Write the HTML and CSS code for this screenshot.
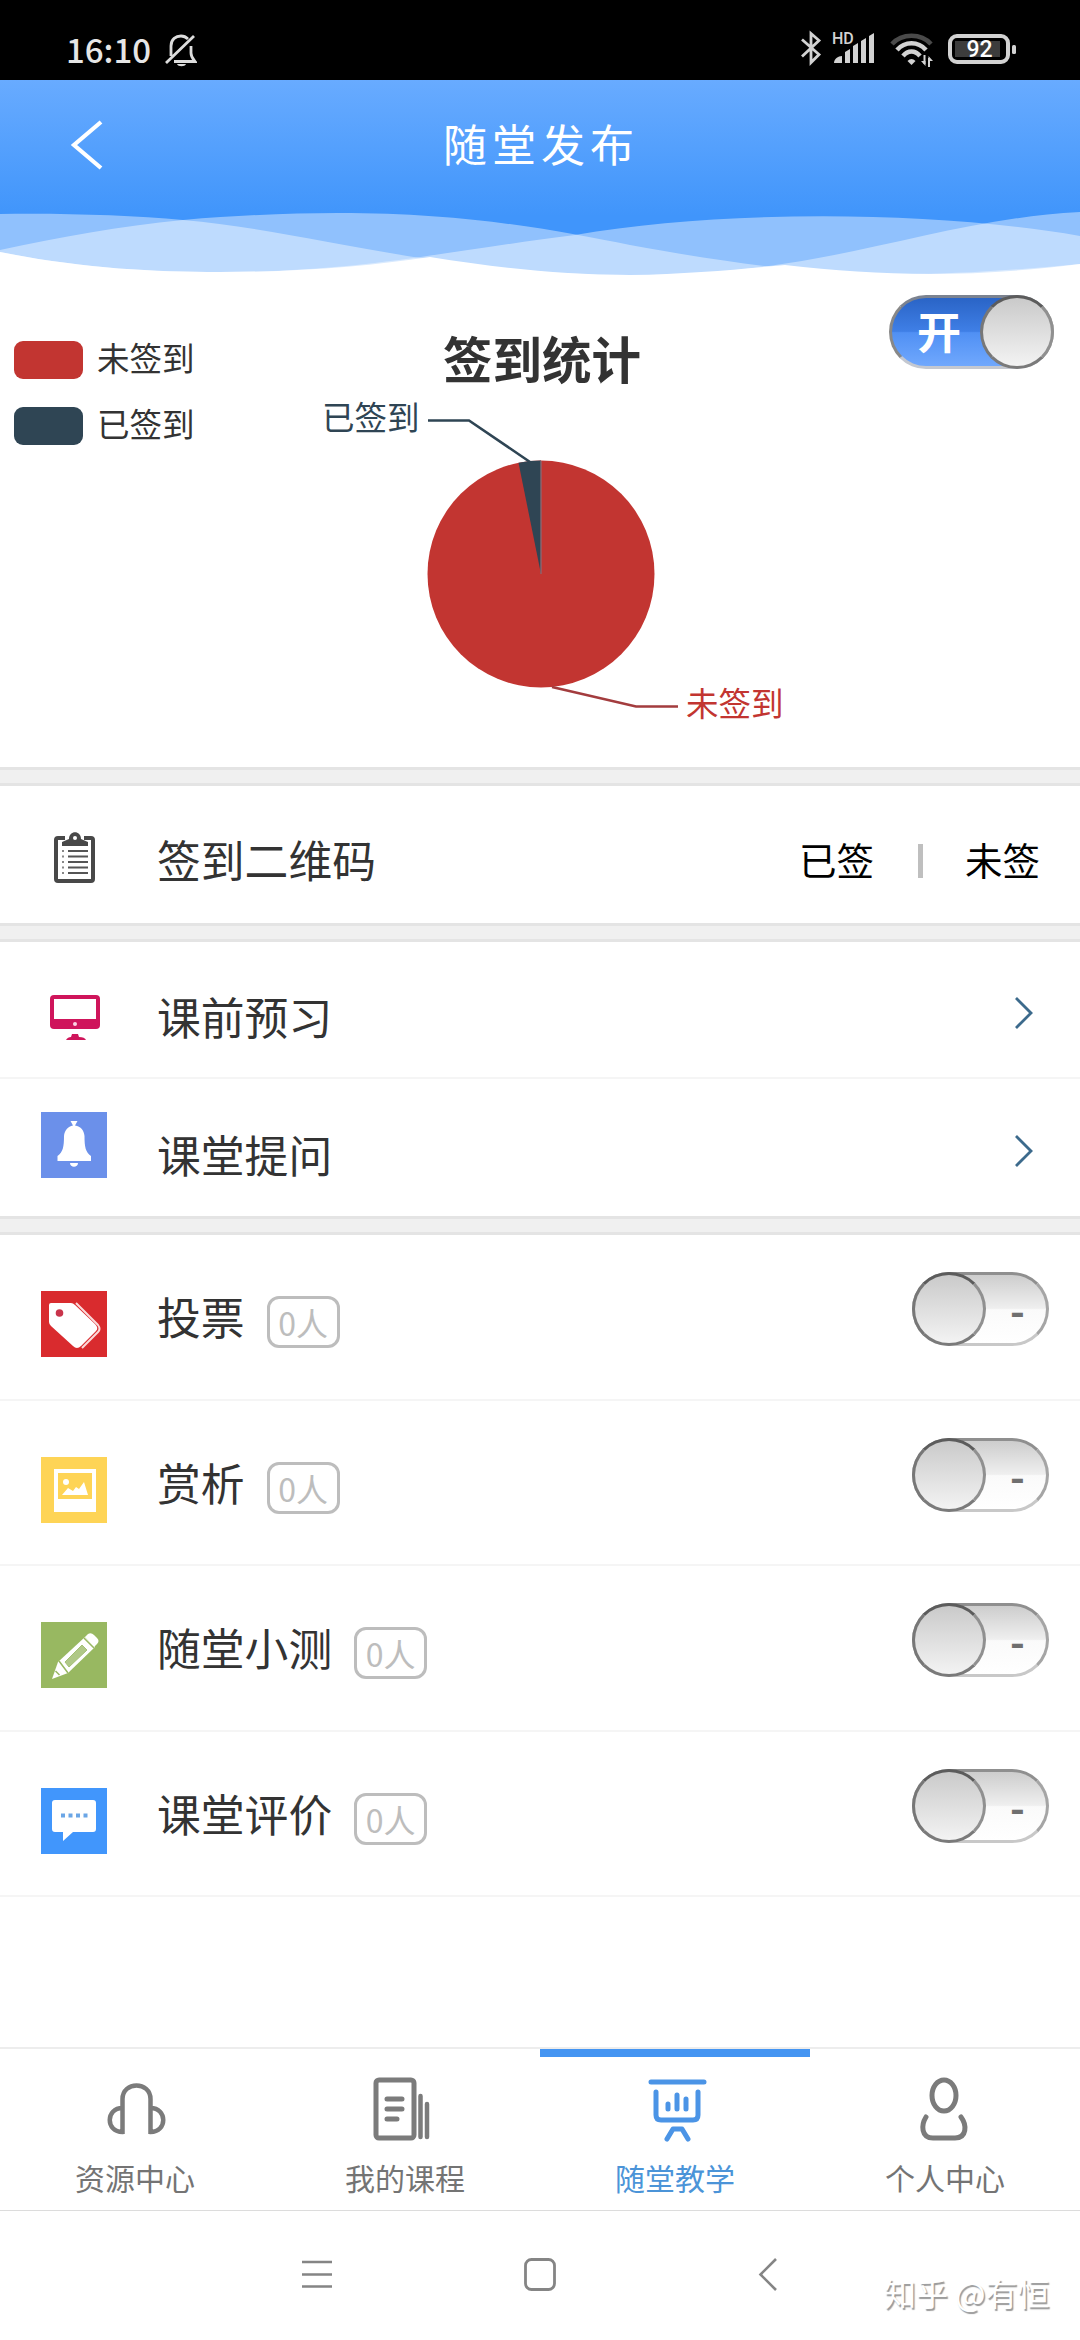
FILE: index.html
```html
<!DOCTYPE html>
<html lang="zh-CN">
<head>
<meta charset="utf-8">
<title>随堂发布</title>
<link rel="stylesheet" href="styles.css">
</head>
<body>
<div class="screen">
  <div class="status">
    <span class="clock">16:10</span>
    <svg class="mute" width="32" height="34" viewBox="0 0 32 34" fill="none" stroke="#ddd" stroke-width="2.8">
      <path d="M6 22V12C6 5 11 2 16 2c3 0 5 1 7 3M26 12v7c0 4 2 6 4 8.500H9M1 29L29 2"/>
      <path d="M12 30h9c-1 3-8 3-9 0z" fill="#ddd" stroke="none"/>
    </svg>
    <svg class="sys" width="220" height="40" viewBox="0 0 220 40">
      <path d="M2 10l17 15-8 8V4l8 7L2 27" transform="translate(0,-0.500)" fill="none" stroke="#d2d2d2" stroke-width="2.800"/>
      <text x="32" y="14" class="hd">HD</text>
      <g fill="#d2d2d2"><path d="M34 33c0-4 4-7 8-7v7z"/><path d="M45 22l5-3v14h-5zM53 16l5-3v20h-5zM61 11l5-3v25h-5zM69 6l5-3v30h-5z"/></g>
      <g fill="none" stroke="#d2d2d2" stroke-width="4.500"><path stroke="#4a4a4a" d="M92 14c10-11 29-11 39 0"/><path d="M97 20c8-9 21-9 29 0M103 26c5-6 12-6 17 0"/></g>
      <path d="M107.500 31q4-4 8 0l-4 4z" fill="#d2d2d2"/>
      <path d="M124.500 25v9M129 37v-9" stroke="#d2d2d2" stroke-width="2"/><path d="M121 31h4.500v5zM128.500 26v5h4.500z" fill="#d2d2d2"/>
      <rect x="150" y="6" width="58" height="26" rx="7" fill="none" stroke="#d2d2d2" stroke-width="4"/>
      <rect x="155" y="11" width="45" height="16" fill="#3c3c3c"/>
      <rect x="212" y="15" width="4" height="9" rx="1.500" fill="#d2d2d2"/>
      <text x="179.500" y="26.500" text-anchor="middle" class="pct">92</text>
    </svg>
  </div>

  <header class="header">
    <div class="bar">
      <svg class="back" width="36" height="52" viewBox="0 0 36 52" fill="none" stroke="#fff" stroke-width="4.200"><path d="M31 3L4 26l27 23"/></svg>
      <h1>随堂发布</h1>
    </div>
    <svg class="waves" width="1080" height="70" viewBox="0 0 1080 70">
      <g fill="#fff" fill-opacity=".42">
        <path d="M0 4C60 3 130 5 183 10C310 21 430 64 630 65C830 66 930 10 1080 2V70H0z"/>
        <path d="M0 40C60 27 120 16 183 10C420-10 540 18 630 35C800 66 890 72 1080 54V70H0z"/>
        <path d="M0 42C80 58 150 62 220 62C360 62 440 42 575 25C720 0 930 0 1080 26V70H0z"/>
      </g>
      <path fill="#fff" d="M0 42C80 58 150 62 220 62C300 62 370 56 430 47C500 58 560 65 630 65C690 64 740 59 785 55C880 66 970 68 1080 54V70H0z"/>
    </svg>
  </header>

  <section class="chart">
    <ul class="legend">
      <li><i class="sw red"></i><span>未签到</span></li>
      <li><i class="sw navy"></i><span>已签到</span></li>
    </ul>
    <svg class="pie" width="520" height="487" viewBox="280 280 520 487">
      <text x="542" y="379" text-anchor="middle" class="chart-title">签到统计</text>
      <circle cx="541" cy="574" r="113.500" fill="#c23531"/>
      <path d="M541 574L518.500 462.800A113.500 113.500 0 0 1 541 460.500z" fill="#2f4554"/>
      <path d="M541 461v113" stroke="#8d6a74" stroke-width="1.300"/>
      <path d="M428 420.500h41L530 462" fill="none" stroke="#2f4554" stroke-width="2.600"/>
      <path d="M552 687l84 19.500h42" fill="none" stroke="#a33c3e" stroke-width="2.600"/>
      <text x="322" y="430" class="lbl" fill="#2f4554">已签到</text>
      <text x="686" y="716" class="lbl" fill="#c23531">未签到</text>
    </svg>
    <div class="switch on"><span>开</span><b></b></div>
  </section>

  <section class="group">
    <div class="row qr">
      <svg class="ico" width="66" height="66" viewBox="0 0 66 66">
        <rect x="15" y="13" width="37" height="43" rx="2" fill="none" stroke="#484848" stroke-width="4"/>
        <path d="M24 10h19v8H24z" fill="#fff"/>
        <path d="M21 21v-4l7-3c0-9 12-9 12 0l7 3v4z" fill="#484848"/><circle cx="34" cy="13" r="2" fill="#fff"/>
        <path d="M27 26h20M27 31.500h20M27 37h20M27 42.500h20M27 48h20" stroke="#555" stroke-width="2.200"/>
        <path d="M21 26h2M21 31.500h2M21 37h2M21 42.500h2M21 48h2" stroke="#888" stroke-width="2.200"/>
      </svg>
      <span class="name">签到二维码</span>
      <span class="opt">已签</span><i class="sep"></i><span class="opt">未签</span>
    </div>
  </section>

  <section class="group">
    <div class="row link line">
      <svg class="ico monitor" width="66" height="66" viewBox="0 0 66 66">
        <rect x="9" y="10" width="50" height="34" rx="4" fill="#cf155b"/><path d="M13 14h42v20H13z" fill="#fff"/><circle cx="34" cy="39" r="2" fill="#fbd3e2"/>
        <path d="M31 49h6l1 3c4 0 6 1 7 3H25c1-2 3-3 5-3z" fill="#cf155b"/>
      </svg>
      <span class="name">课前预习</span>
      <svg class="go" width="22" height="34" viewBox="0 0 22 34"><path d="M3 2l15 15L3 32"/></svg>
    </div>
    <div class="row link">
      <svg class="ico bell" width="66" height="66" viewBox="0 0 66 66">
        <path d="M0 0h66v66H0z" fill="#6b90ea"/>
        <path d="M29.500 9h7l-2.500 4.500c6 1 9 5 9.500 10.500c0 11 1 16 6.500 20v5H16.500v-5c5.500-4 6.500-9 6.500-20c.5-5.500 4-9.500 9-10.500zM29 51h8c0 5-8 5-8 0z" fill="#fff"/>
      </svg>
      <span class="name">课堂提问</span>
      <svg class="go" width="22" height="34" viewBox="0 0 22 34"><path d="M3 2l15 15L3 32"/></svg>
    </div>
  </section>

  <section class="group">
    <div class="row act">
      <svg class="ico" width="66" height="66" viewBox="0 0 66 66">
        <path d="M0 0h66v66H0z" fill="#d92b2e"/>
        <path d="M8 14q0-2 2-2h20q2 0 4 2l20 19q4 4 1 7L40 55q-4 4-8 0L10 35q-2-2-2-4z" fill="#fff"/><circle cx="18.500" cy="22" r="3.800" fill="#c9344b"/>
        <path d="M35 12l22 22q3 4 0 7L41 57" fill="none" stroke="#fbdada" stroke-width="2"/>
      </svg>
      <span class="name">投票</span><span class="count">0人</span>
      <div class="switch off"><b></b><span>-</span></div>
    </div>
    <div class="row act">
      <svg class="ico" width="66" height="66" viewBox="0 0 66 66">
        <path d="M0 0h66v66H0z" fill="#fed456"/>
        <path d="M13 12h42v43H13zM17 16v26h34V16z" fill="#fff" fill-rule="evenodd"/>
        <path d="M21 38l6-7 5 3 3-4 3 2 5-7 4 13z" fill="#fff"/><circle cx="25" cy="25" r="3" fill="#fff"/>
      </svg>
      <span class="name">赏析</span><span class="count">0人</span>
      <div class="switch off"><b></b><span>-</span></div>
    </div>
    <div class="row act">
      <svg class="ico" width="66" height="66" viewBox="0 0 66 66">
        <path d="M0 0h66v66H0z" fill="#98b861"/>
        <path d="M11 57l6-17 27-25 10 10-27 26z" fill="#fff"/>
        <path d="M44 15l3-3q3-2 6 1l3 3q3 3 0 6l-3 3z" fill="#fff"/>
        <path d="M43 16l10 10M18 39l9 12M14.500 49l4 4" stroke="#98b861" stroke-width="1.500"/>
        <path d="M24 40L41 23l5 5-18 17z" fill="#b0c887" stroke="#a4c074"/>
      </svg>
      <span class="name">随堂小测</span><span class="count">0人</span>
      <div class="switch off"><b></b><span>-</span></div>
    </div>
    <div class="row act">
      <svg class="ico" width="66" height="66" viewBox="0 0 66 66">
        <path d="M0 0h66v66H0z" fill="#4196fc"/>
        <path d="M14 12h38q3 0 3 3v26q0 3-3 3H32l-10 9V44h-8q-3 0-3-3V15q0-3 3-3z" fill="#fff"/>
        <path d="M20 27.500h4M27.500 27.500h4M35 27.500h4M42.500 27.500h4" stroke="#6ba6e6" stroke-width="4"/>
      </svg>
      <span class="name">课堂评价</span><span class="count">0人</span>
      <div class="switch off"><b></b><span>-</span></div>
    </div>
  </section>

  <nav class="tabs">
    <a class="tab">
      <svg width="70" height="70" viewBox="0 0 70 70" fill="none" stroke="#7b7b7b" stroke-width="4.500"><path d="M22.500 62V27c0-18 28-18 28 0v35M22.500 36c-17 0-17 24 0 24h1M50.500 36c17 0 17 24 0 24h-1"/></svg>
      <span>资源中心</span>
    </a>
    <a class="tab">
      <svg width="70" height="70" viewBox="0 0 70 70" fill="none" stroke="#7b7b7b" stroke-width="5" stroke-linecap="round"><rect x="6" y="8" width="38" height="58" rx="3"/><path d="M17 27h15M17 37h15M17 47h10"/><path d="M50.500 24v41M57 32v33" stroke-width="4.500"/></svg>
      <span>我的课程</span>
    </a>
    <a class="tab active">
      <svg width="70" height="70" viewBox="0 0 70 70" fill="none" stroke="#4b94e6" stroke-width="5" stroke-linecap="round" stroke-linejoin="round"><path d="M11 10h53M16 20v23q0 5 5 5h32q5 0 5-5V20M28 32v5M37 23v14M46 27v10M27 67l6-10h9l6 10"/></svg>
      <span>随堂教学</span>
    </a>
    <a class="tab">
      <svg width="70" height="70" viewBox="0 0 70 70" fill="none" stroke="#7b7b7b" stroke-width="5" stroke-linecap="round"><ellipse cx="34" cy="23.500" rx="12" ry="15.500"/><path d="M16 45c-5 8-5 21 7 21h22c12 0 12-13 6-21"/></svg>
      <span>个人中心</span>
    </a>
  </nav>

  <footer class="sysnav">
    <svg width="32" height="34" viewBox="0 0 32 34" stroke="#858585" stroke-width="2.600"><path d="M1 5h30M1 17.500h30M1 29.500h30"/></svg>
    <svg width="34" height="36" viewBox="0 0 34 36" fill="none" stroke="#858585" stroke-width="2.800"><rect x="2.500" y="2.500" width="29" height="30" rx="6"/></svg>
    <svg width="20" height="36" viewBox="0 0 20 36" fill="none" stroke="#858585" stroke-width="2.600"><path d="M18 2L2.500 17.500 18 33"/></svg>
    <span class="mark">知乎 @有恒</span>
  </footer>
</div>
</body>
</html>
```
FILE: styles.css
```css
*, *::before { box-sizing: border-box; }
body { margin: 0; background: #fff; font-family: "Noto Sans CJK SC", sans-serif; color: #333; }
.screen { width: 1080px; height: 2340px; display: flex; flex-direction: column; overflow: hidden; }
.screen > * { flex: none; }
svg { display: block; }

.status { height: 80px; background: #000; display: flex; align-items: flex-start; padding: 29px 54px 0 66px; }
.clock { font-size: 33px; line-height: 40px; font-weight: 500; color: #e6e6e6; width: 99px; white-space: nowrap; }
.mute { margin-top: 5px; }
.sys { margin: 1px 6px 0 auto; }
.hd { font: 500 16px Roboto, sans-serif; fill: #d2d2d2; }
.pct { font: 500 23px Roboto, sans-serif; fill: #fff; }

.header { height: 200px; background: linear-gradient(#68abff, #4095fb 68%); display: flex; flex-direction: column; }
.bar { height: 130px; display: grid; grid-template-columns: 200px 1fr 200px; align-items: center; }
.back { margin-left: 70px; }
.bar h1 { margin: 0 0 5px; font-size: 44px; font-weight: 400; letter-spacing: 5px; line-height: 60px; color: #fff; text-align: center; padding-left: 2px; }

.chart { height: 487px; display: grid; grid-template-columns: 280px 520px 1fr; }
.legend { list-style: none; margin: 0; padding: 46px 0 0 14px; font-size: 32.500px; }
.legend li { display: flex; align-items: center; gap: 14px; height: 66px; line-height: 66px; white-space: nowrap; }
.legend span { margin-top: -4px; }
.sw { width: 69px; height: 38px; border-radius: 9px; margin-top: 2px; }
.red { background: #c23531; }
.navy { background: #2f4554; }
.chart-title { font-size: 49.500px; font-weight: 700; fill: #333; }
.lbl { font-size: 32.500px; }

.switch { display: flex; align-items: center; height: 74px; border: 3px solid; border-radius: 37px; }
.switch b { flex: none; width: 74px; height: 74px; border-radius: 50%; border: 3px solid; border-color: #5c5c5c #909090 #7a7a7a #777; background: linear-gradient(#cacaca, #f3f3f3); }
.switch span { flex: 1; text-align: center; }
.on { width: 165px; margin: 15px 0 0 89px; border-color: #7c8390 #999 #c4c8d0 #888; background: linear-gradient(#2a64c6, #3f7fe6 49%, #5090f4 51%, #70a8fd); }
.on span { font-size: 44px; font-weight: 700; color: #fff; padding-left: 6px; line-height: 60px; margin-top: -4px; }
.on b { margin-right: -3px; }
.off { width: 137px; border-color: #8f8f8f #a5a5a5 #c8c8c8; background: linear-gradient(#cdcdcd, #efefef 49%, #fafafa 51%, #fff); }
.off b { margin-left: -3px; }
.off span { font-size: 40px; font-weight: 700; color: #6f6f6f; line-height: 50px; padding: 0 0 0 3px; }

.group { border-top: 19px solid #f0f0f0; position: relative; }
.group::before { content: ""; position: absolute; inset: -19px 0 auto; height: 19px; border: solid #e4e4e4; border-width: 3px 0; }
.row { display: flex; align-items: center; padding-left: 41px; }
.ico { flex: none; margin-right: 50px; }
.name { font-size: 43.800px; line-height: 60px; white-space: nowrap; color: #333; }
.qr { height: 137px; padding-right: 40px; }
.qr .name { margin-top: 9px; margin-right: auto; }
.qr .ico { margin-top: 6px; }
.opt { font-size: 37.500px; line-height: 50px; color: #000; margin-top: 8px; }
.sep { width: 5px; height: 34px; background: #bfbfbf; margin: 12px 42px 0 44px; }
.link { height: 137px; padding-right: 45px; }
.link .name { margin: 12px auto 0 0; }
.monitor { margin-top: 17px; }
.bell { margin-top: -5px; }
.go { margin-top: 7px; }
.line { border-bottom: 2px solid #f5f5f5; }
.go path { fill: none; stroke: #3c6a8c; stroke-width: 2.800; }
.act { height: 165.250px; border-bottom: 2px solid #f5f5f5; padding-right: 31px; align-items: flex-start; }
.act:first-child { height: 166px; }
.act .ico { margin-top: 56px; }
.act .name { margin-top: 51px; }
.count { width: 73px; height: 52px; margin: 61px auto 0 22px; border: 3px solid #bdbdbd; border-radius: 12px; font-size: 32px; line-height: 46px; color: #bdbdbd; text-align: center; white-space: nowrap; }
.act .switch { margin-top: 37px; }

.tabs { margin-top: auto; height: 164px; border-top: 2px solid #ededed; border-bottom: 1px solid #dcdcdc; display: grid; grid-template-columns: repeat(4, 1fr); }
.tab { display: flex; flex-direction: column; align-items: center; border-top: 8px solid transparent; padding-top: 15px; font-size: 30px; line-height: 40px; color: #747474; }
.tab span { margin-top: 15px; white-space: nowrap; }
.active { border-color: #4595f2; color: #4b94d8; }

.sysnav { height: 129px; display: grid; grid-template-columns: 222px 235px 126px 1fr; align-items: start; padding: 46px 0 0 301px; }
.mark { font-size: 32px; line-height: 40px; margin-top: 15px; color: #fff; text-shadow: 1.500px 1.500px 1px #999; white-space: nowrap; }
```
